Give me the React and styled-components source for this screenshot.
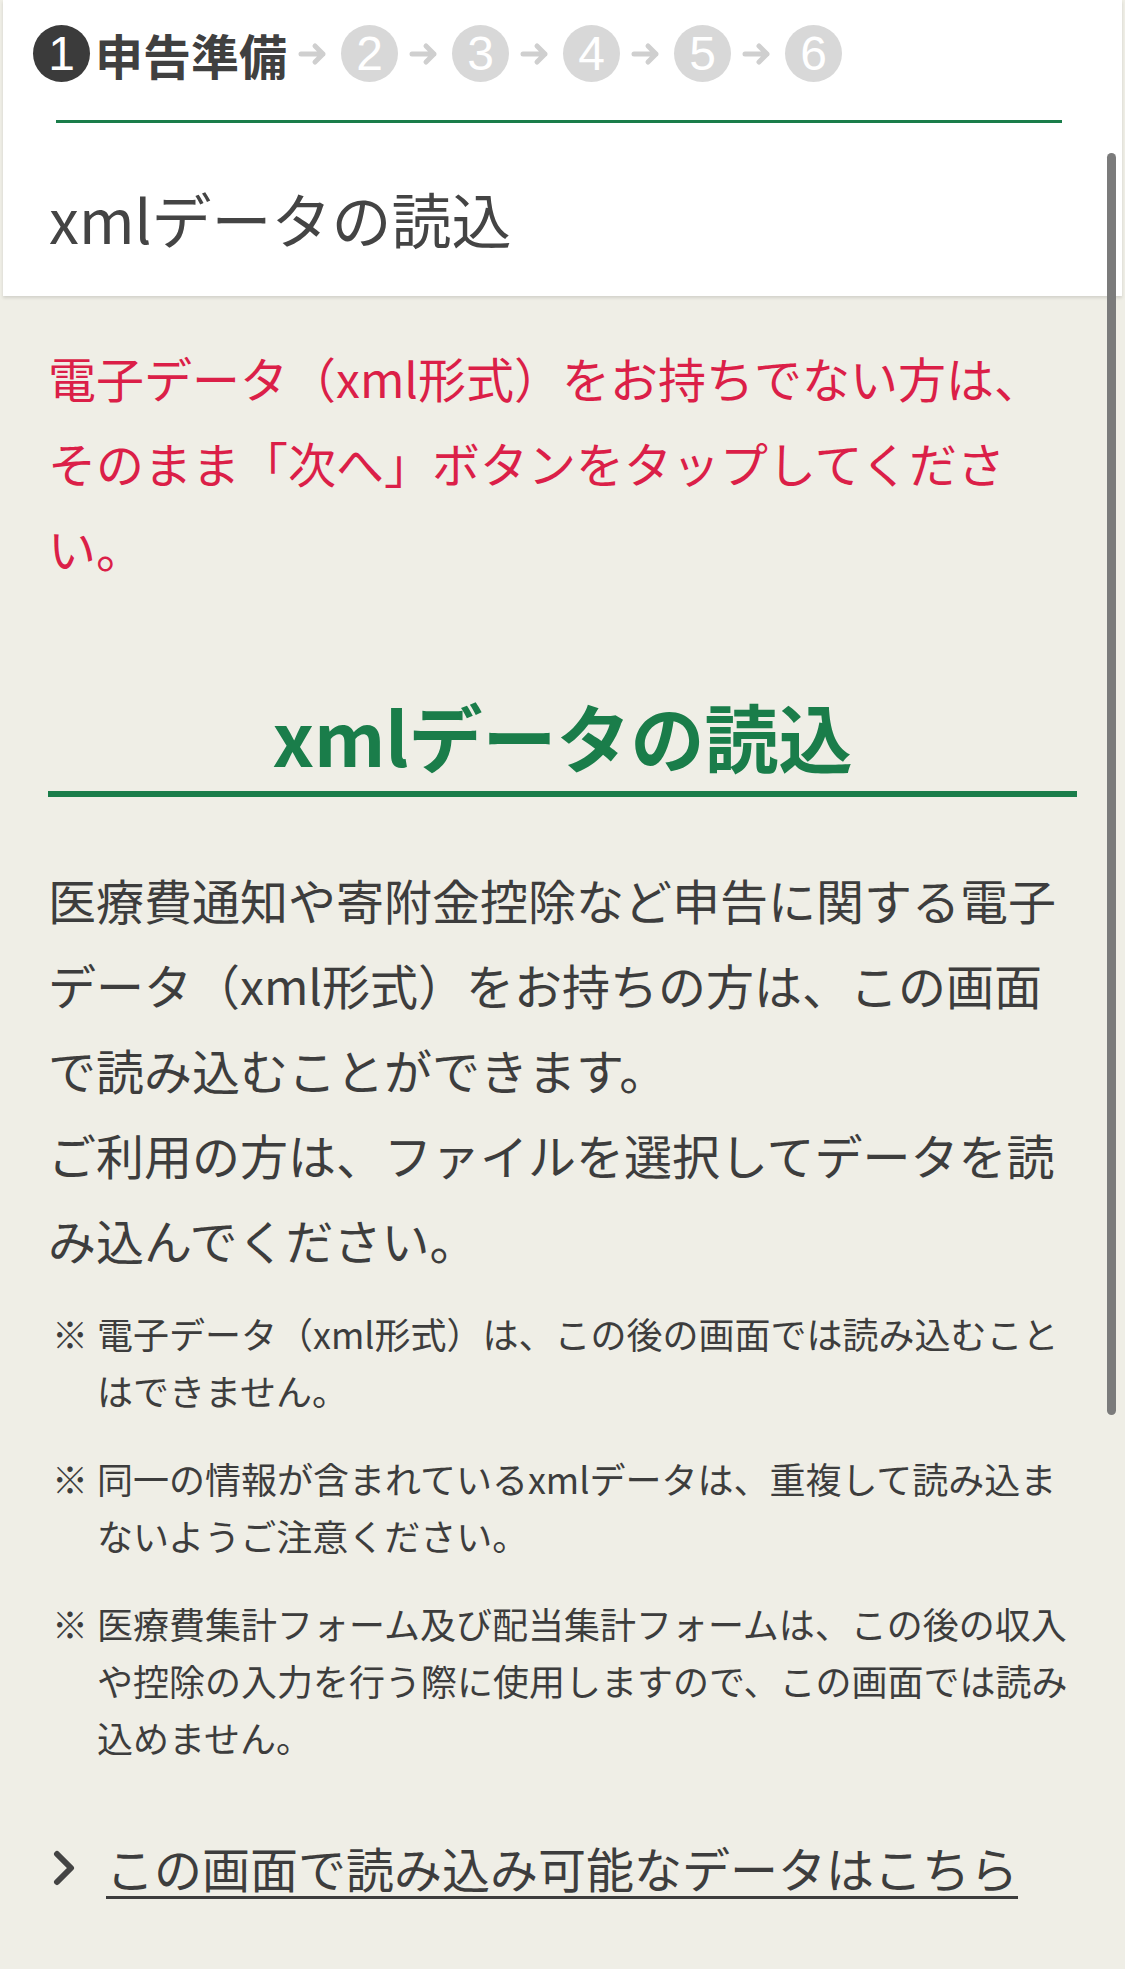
import React from "react";
import styled, { createGlobalStyle } from "styled-components";

const GlobalStyle = createGlobalStyle`
  html, body {
    margin: 0;
    padding: 0;
    background: #efeee6;
  }
  body {
    font-family: "Noto Sans CJK JP", "Noto Sans", sans-serif;
    color: #3d3d3d;
  }
`;

const steps = [2, 3, 4, 5, 6];

const notes = [
  ["電子データ（xml形式）は、この後の画面では読み込むこと", "はできません。"],
  ["同一の情報が含まれているxmlデータは、重複して読み込ま", "ないようご注意ください。"],
  [
    "医療費集計フォーム及び配当集計フォームは、この後の収入",
    "や控除の入力を行う際に使用しますので、この画面では読み",
    "込めません。",
  ],
];

const Arrow = () => (
  <ArrowIcon viewBox="0 0 30 24" width="30" height="24">
    <path
      d="M3 12 H25 M17 4 L25 12 L17 20"
      fill="none"
      stroke="#cfcfcf"
      strokeWidth="5"
      strokeLinecap="round"
      strokeLinejoin="round"
    />
  </ArrowIcon>
);

const Chevron = () => (
  <ChevronIcon viewBox="0 0 26 36" width="26" height="36">
    <path
      d="M5 4 L19 18 L5 32"
      fill="none"
      stroke="#444"
      strokeWidth="6"
      strokeLinecap="round"
      strokeLinejoin="round"
    />
  </ChevronIcon>
);

const App = () => {
  return (
    <Page>
      <GlobalStyle />
      <HeaderCard>
        <Stepper>
          <StepCircle active>1</StepCircle>
          <StepLabel>申告準備</StepLabel>
          {steps.map(n => (
            <React.Fragment key={n}>
              <Arrow />
              <StepCircle>{n}</StepCircle>
            </React.Fragment>
          ))}
        </Stepper>
        <GreenRule />
        <PageTitle>xmlデータの読込</PageTitle>
      </HeaderCard>

      <Main>
        <Warning>
          電子データ（xml形式）をお持ちでない方は、
          <br />
          そのまま「次へ」ボタンをタップしてくださ
          <br />
          い。
        </Warning>

        <SectionHeading>xmlデータの読込</SectionHeading>

        <Lead>
          医療費通知や寄附金控除など申告に関する電子
          <br />
          データ（xml形式）をお持ちの方は、この画面
          <br />
          で読み込むことができます。
          <br />
          ご利用の方は、ファイルを選択してデータを読
          <br />
          み込んでください。
        </Lead>

        <NoteList>
          {notes.map((lines, i) => (
            <Note key={i}>
              <NoteMark>※</NoteMark>
              <NoteText>
                {lines.map((line, j) => (
                  <React.Fragment key={j}>
                    {j > 0 && <br />}
                    {line}
                  </React.Fragment>
                ))}
              </NoteText>
            </Note>
          ))}
        </NoteList>

        <LinkRow>
          <Chevron />
          <TextLink href="#">この画面で読み込み可能なデータはこちら</TextLink>
        </LinkRow>
      </Main>

      <ScrollThumb />
    </Page>
  );
};

/*
==== Component Styles ====
*/

const Page = styled.div`
  position: relative;
  width: 1125px;
  min-height: 1969px;
  background: #efeee6;
  overflow: hidden;
`;

const HeaderCard = styled.header`
  margin: 0 3px;
  padding: 25px 0 38px;
  background: #fff;
  box-shadow: 0 2px 3px rgba(0, 0, 0, 0.12);
`;

const Stepper = styled.div`
  display: flex;
  align-items: center;
  padding-left: 30px;
  height: 57px;
`;

const StepCircle = styled.span`
  display: flex;
  align-items: center;
  justify-content: center;
  width: 57px;
  height: 57px;
  border-radius: 50%;
  background: ${p => (p.active ? "#3b3b3b" : "#d8d8d8")};
  color: #fff;
  font-family: "Liberation Sans", "Noto Sans", sans-serif;
  font-size: 48px;
  line-height: 1;
  flex-shrink: 0;
`;

const StepLabel = styled.span`
  margin-left: 5px;
  font-size: 48px;
  font-weight: 700;
  color: #404040;
  line-height: 1;
`;

const ArrowIcon = styled.svg`
  margin: 0 13px 0 11px;
  flex-shrink: 0;
`;

const GreenRule = styled.div`
  height: 3px;
  margin: 38px 60px 0 53px;
  background: #1a7d4a;
`;

const PageTitle = styled.h1`
  margin: 55px 0 0 46px;
  font-size: 60px;
  font-weight: 400;
  line-height: 80px;
  color: #444;
`;

const Main = styled.main`
  padding: 0 48px;
`;

const Warning = styled.p`
  margin: 39px 0 0;
  font-size: 48px;
  line-height: 85px;
  color: #db1f48;
`;

const SectionHeading = styled.h2`
  margin: 102px 0 0;
  padding-bottom: 13px;
  border-bottom: 6px solid #1a7d4a;
  text-align: center;
  font-size: 74px;
  font-weight: 700;
  line-height: 86px;
  color: #1a7d4a;
`;

const Lead = styled.p`
  margin: 60px 0 0;
  font-size: 48px;
  line-height: 85px;
  color: #3d3d3d;
`;

const NoteList = styled.ul`
  list-style: none;
  margin: 23px 0 0;
  padding: 0;
`;

const Note = styled.li`
  display: flex;
  font-size: 36px;
  line-height: 57px;
  color: #3d3d3d;
  & + & {
    margin-top: 31px;
  }
`;

const NoteMark = styled.span`
  flex: 0 0 49px;
  padding-left: 4px;
  box-sizing: border-box;
`;

const NoteText = styled.span`
  flex: 1;
  white-space: nowrap;
`;

const LinkRow = styled.div`
  display: flex;
  align-items: center;
  margin-top: 59px;
  height: 85px;
`;

const ChevronIcon = styled.svg`
  margin: 0 28px 0 4px;
  flex-shrink: 0;
`;

const TextLink = styled.a`
  font-size: 48px;
  line-height: 85px;
  color: #3d3d3d;
  text-decoration: underline;
  text-decoration-thickness: 3px;
  text-underline-offset: 8px;
`;

const ScrollThumb = styled.div`
  position: absolute;
  top: 153px;
  left: 1107px;
  width: 9px;
  height: 1262px;
  border-radius: 5px;
  background: #7b7b7b;
`;

export default App;
